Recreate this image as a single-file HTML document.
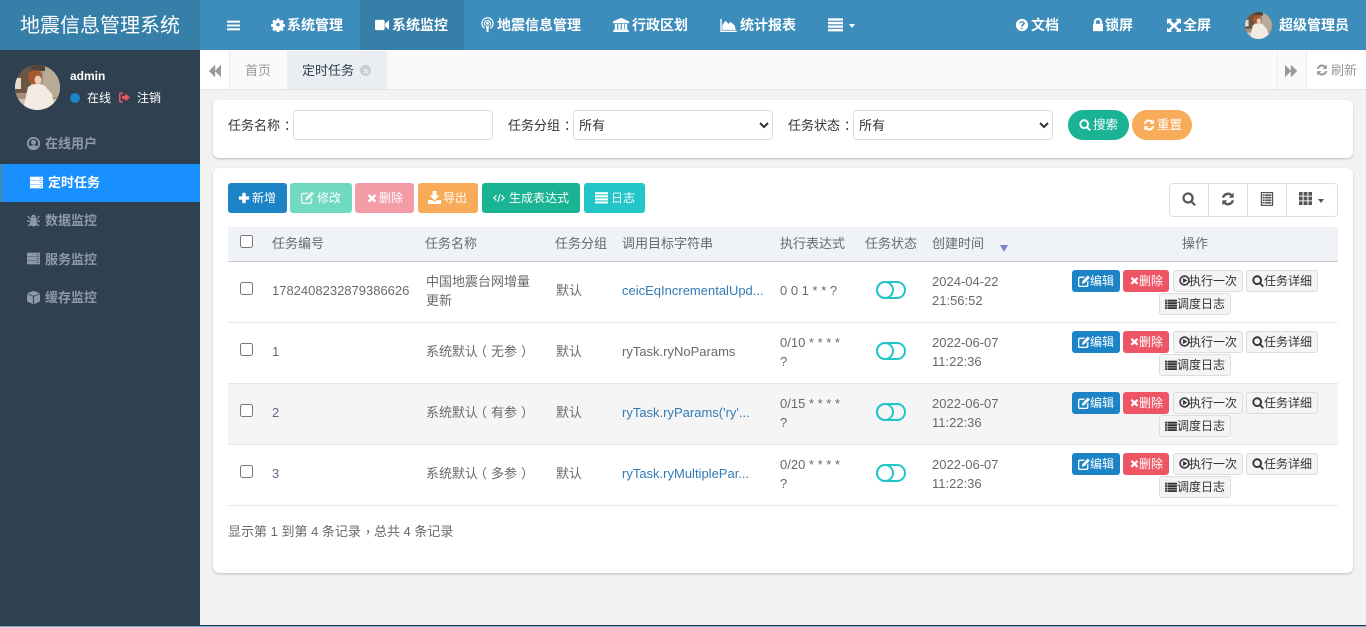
<!DOCTYPE html>
<html lang="zh-CN"><head><meta charset="utf-8"><title>定时任务</title>
<style>
*{box-sizing:border-box}
html,body{margin:0;padding:0;width:1366px;height:627px;overflow:hidden;background:#f2f2f2;font-family:"Liberation Sans","Noto Sans CJK SC",sans-serif;font-size:13px;color:#676a6c}
.a,.t,.i{position:absolute}
.t{white-space:nowrap;line-height:20px;height:20px}
.i{fill:currentColor;stroke:currentColor;stroke-width:.35;overflow:visible}
.i.av{stroke:none}
.n{color:#fff;font-weight:700;font-size:14px;top:15px}
.m{color:#8f99ac;font-weight:700;font-size:13px}
.b{position:absolute;height:30px;top:183px;border-radius:3px;color:#fff;font-size:12px;line-height:30px;white-space:nowrap}
.b span,.r span{position:absolute;top:0}
.r{position:absolute;height:22px;border-radius:3px;font-size:12px;line-height:20px;white-space:nowrap;border:1px solid #ddd;background:#f4f4f4;color:#333}
.r.e{background:#1c84c6;border-color:#1c84c6;color:#fff}
.r.d{background:#ed5565;border-color:#ed5565;color:#fff}
.r svg{position:absolute;top:4px;stroke:currentColor;stroke-width:.35}
.sw{position:absolute;left:876px;width:30px;height:18px;border:2px solid #23c6c8;border-radius:9px}
.sw i{position:absolute;left:-2px;top:-2px;width:18px;height:18px;border:2px solid #23c6c8;border-radius:50%}
input[type=checkbox]{position:absolute;left:240px;width:13px;height:13px;margin:0}
select{position:absolute;top:110px;width:200px;height:30px;border:1px solid #ddd;border-radius:4px;background:#fff;font:13px "Liberation Sans","Noto Sans CJK SC",sans-serif;color:#333;padding:0 0 0 1px}
.link{color:#337ab7}
.lk2{color:#5a6a85}
.c{position:relative;left:4px}
.cm{position:relative;left:4px;top:-3px}
.pl,.pr{position:relative}
.pl{left:-4px}
.pr{left:4px}
</style></head><body>
<svg width="0" height="0" style="position:absolute"><defs>
<symbol id="bars" viewBox="0 0 14 14"><path d="M0 2h14v1.800H0zM0 6.100h14v1.800H0zM0 10.200h14v1.800H0z"/></symbol>
<symbol id="cog" viewBox="0 0 14 14"><path fill-rule="evenodd" d="M5.700 0h2.600l.3 2 1.400.6 1.700-1.200 1.800 1.900-1.100 1.600.6 1.400 2 .4v2.600l-2 .3-.6 1.400 1.100 1.700-1.800 1.800-1.700-1.100-1.400.6-.3 1.900H5.700l-.3-1.900-1.400-.6-1.700 1.100L.5 12.600l1.100-1.700L1 9.500l-2-.3V6.600l2-.4.600-1.400L.5 3.200l1.800-1.900L4 2.600l1.400-.6zM7 4.800a2.200 2.200 0 1 0 0 4.400 2.200 2.200 0 0 0 0-4.400z" transform="translate(1 .6) scale(.86)"/></symbol>
<symbol id="video" viewBox="0 0 14 14"><path d="M0 3.500Q0 2 1.500 2h6.500Q9.500 2 9.500 3.500v7q0 1.500-1.500 1.500H1.500Q0 12 0 10.500zM10.300 5.500 14 2.500v9l-3.700-3z"/></symbol>
<symbol id="pod" viewBox="0 0 14 16"><g fill="none" stroke="currentColor" stroke-width="1.300"><path d="M4 11.500a6 6 0 1 1 6 0"/><path d="M4.800 9a3.300 3.300 0 1 1 4.400 0"/></g><circle cx="7" cy="6.200" r="1.400"/><path d="M5.700 9h2.600l-.5 6.500H6.200z"/></symbol>
<symbol id="bank" viewBox="0 0 16 14"><path d="M8 0l8 3.500V5H0V3.500zM2 6h2v5H2zM5.500 6h2v5h-2zM9 6h2v5H9zM12 6h2v5h-2zM1 11.500h14V12.800H1zM0 13h16v1H0z"/></symbol>
<symbol id="area" viewBox="0 0 16 14"><path d="M0 1h1v11.800h15V14H0zM2 11.800V7l3-4 3 3 2-2 4 3.500 1 4.300z"/></symbol>
<symbol id="tasks" viewBox="0 0 16 14"><path d="M0 0h16v2.200H0zM0 3.800h16v2.200H0zM0 7.600h16v2.200H0zM0 11.400h16v2.200H0z"/></symbol>
<symbol id="q" viewBox="0 0 14 14"><path fill-rule="evenodd" d="M7 1a6 6 0 1 1 0 12A6 6 0 0 1 7 1zM5.600 9.800v1.500h2.200V9.800zM7 3C5.400 3 4.300 3.800 4.200 5.300l1.700.3c.1-.8.500-1.100 1.100-1.100.5 0 1 .3 1 .8 0 .4-.3.700-.8 1-.9.600-1.300 1-1.300 2.100v.3h1.900c0-.7.200-.9.900-1.300.7-.5 1.300-1.100 1.300-2.100C10 3.800 8.600 3 7 3z"/></symbol>
<symbol id="lock" viewBox="0 0 10 14"><path fill-rule="evenodd" d="M0 6h1V4a4 4 0 0 1 8 0v2h1v7H0zM2.800 6h4.400V4a2.200 2.200 0 0 0-4.400 0z"/></symbol>
<symbol id="exp" viewBox="0 0 14 14"><path d="M0 1h5L3.500 2.500 7 6 10.500 2.500 9 1h5v5l-1.500-1.500L9 8l3.500 3.500L14 10v4H9l1.500-1.500L7 9l-3.500 3.500L5 14H0v-4l1.500 1.500L5 8 1.500 4.500 0 6z"/></symbol>
<symbol id="user" viewBox="0 0 14 14"><path fill-rule="evenodd" d="M7 0a7 7 0 1 1 0 14A7 7 0 0 1 7 0zM7 1.700a5.300 5.300 0 0 0-4 8.700C3.700 9.400 5 9 7 9s3.300.4 4 1.400a5.300 5.300 0 0 0-4-8.700zm0 1.500a2.500 2.500 0 1 1 0 5 2.500 2.500 0 0 1 0-5z"/></symbol>
<symbol id="srv" viewBox="0 0 14 14"><path fill-rule="evenodd" d="M0 1h14v3.500H0zM0 5.300h14v3.500H0zM0 9.600h14v3.500H0zM10 2.300v1h3v-1zM10 6.500v1h3v-1zM10 10.800v1h3v-1z"/></symbol>
<symbol id="bug" viewBox="0 0 14 14"><path d="M4.500 3.500a2.500 2.500 0 0 1 5 0zM4 4.300h6L10.500 12Q7 14.500 3.500 12zM1 2l2.800 3-.6.600L.3 2.700zM13 2l-2.800 3 .6.600 2.900-2.900zM0 7.300h3.200v1H0zM10.800 7.300H14v1h-3.200zM3.300 10l-2.500 2.500.7.700L4 11zM10.700 10l2.500 2.500-.7.700L10 11z"/></symbol>
<symbol id="cube" viewBox="0 0 14 14"><path d="M7 0l6.500 2.500L7 5 .5 2.500zM0 3.500l6.300 2.500v8L0 11zM14 3.500 7.700 6v8l6.300-3z"/></symbol>
<symbol id="signout" viewBox="0 0 12 12"><path d="M0 2q0-1.500 1.500-1.500H4V2H1.600v8H4v1.500H1.500Q0 11.500 0 10zM7 2l5 4-5 4V7.600H3.500V4.400H7z"/></symbol>
<symbol id="bk" viewBox="0 0 12 12"><path d="M6 0v12L0 6zM12 0v12L6 6z"/></symbol>
<symbol id="fw" viewBox="0 0 12 12"><path d="M0 0v12L6 6zM6 0v12L12 6z"/></symbol>
<symbol id="ref" viewBox="0 0 14 14"><path d="M12.500 1v4.500H8l1.700-1.700A4 4 0 0 0 3.300 5.500H1.100a6 6 0 0 1 10-3.100zM1.500 13V8.500H6l-1.700 1.700a4 4 0 0 0 6.400-1.700h2.200a6 6 0 0 1-10 3.100z"/></symbol>
<symbol id="srch" viewBox="0 0 14 14"><path fill-rule="evenodd" d="M6 .5a5.500 5.500 0 0 1 4.400 8.800l3.300 3.300-1.300 1.300-3.300-3.300A5.500 5.500 0 1 1 6 .5zm0 1.900a3.600 3.600 0 1 0 0 7.200 3.600 3.600 0 0 0 0-7.200z"/></symbol>
<symbol id="plus" viewBox="0 0 12 12"><path d="M4.500 1h3v3.500H11v3H7.500V11h-3V7.500H1v-3h3.500z"/></symbol>
<symbol id="edit" viewBox="0 0 14 14"><path d="M2.500 2H8L6.700 3.300H2.500Q1.300 3.300 1.300 4.500v7q0 1.200 1.200 1.200h7q1.200 0 1.200-1.200V8L12 6.700v4.800Q12 14 9.500 14h-7Q0 14 0 11.500v-7Q0 2 2.500 2zM11.500.7 13.800 3 7.500 9.300 4.700 10l.7-3z"/></symbol>
<symbol id="x" viewBox="0 0 12 12"><path d="M3 1.500 6 4.500l3-3L11 3.500l-3 2.900 3 3-2 2-3-3-3 3-2-2 3-3-3-2.900z"/></symbol>
<symbol id="dl" viewBox="0 0 14 14"><path d="M5 0h4v5h3L7 10 2 5h3zM0 10h4.500L7 12l2.500-2H14v4H0z"/></symbol>
<symbol id="code" viewBox="0 0 14 12"><path fill="none" stroke="currentColor" stroke-width="1.300" d="M4 3 1 6l3 3M10 3l3 3-3 3M8.300 1.500 5.700 10.500"/></symbol>
<symbol id="play" viewBox="0 0 14 14"><path fill-rule="evenodd" d="M7 .5a6.500 6.500 0 1 1 0 13 6.500 6.500 0 0 1 0-13zM7 2.200a4.800 4.800 0 1 0 0 9.600 4.800 4.800 0 0 0 0-9.600zM5.300 4l5 3-5 3z"/></symbol>
<symbol id="list" viewBox="0 0 14 12"><path d="M0 1h2v2H0zM3 1h11v2H3zM0 4h2v2H0zM3 4h11v2H3zM0 7h2v2H0zM3 7h11v2H3zM0 10h2v2H0zM3 10h11v2H3z"/></symbol>
<symbol id="tbl" viewBox="0 0 14 14"><path fill-rule="evenodd" d="M1 0h12v14H1zM2 1v12h10V1zM3 2.500h1.500v1.300H3zM5.300 2.500H11v1.300H5.300zM3 5h1.500v1.300H3zM5.300 5H11v1.300H5.300zM3 7.600h1.500v1.300H3zM5.300 7.600H11v1.300H5.300zM3 10.200h1.500v1.300H3zM5.300 10.200H11v1.300H5.300z"/></symbol>
<symbol id="grid" viewBox="0 0 14 14"><path d="M0 0h3.700v3.800H0zM5.100 0h3.800v3.800H5.100zM10.300 0H14v3.800h-3.700zM0 5.100h3.700v3.800H0zM5.100 5.100h3.800v3.800H5.100zM10.300 5.100H14v3.800h-3.700zM0 10.200h3.700V14H0zM5.100 10.200h3.800V14H5.100zM10.300 10.200H14V14h-3.700z"/></symbol>
<symbol id="av" viewBox="0 0 45 45"><clipPath id="cp"><circle cx="22.500" cy="22.500" r="22.500"/></clipPath><g clip-path="url(#cp)"><rect width="45" height="45" fill="#a8917b"/><rect width="16" height="28" fill="#6b5645"/><rect x="28" width="17" height="32" fill="#b9ab97"/><rect x="16" width="14" height="6" fill="#53423a"/><rect x="0" y="13" width="6" height="11" fill="#e6dccb"/><rect y="34" width="45" height="11" fill="#d1c1ae"/><path d="M13 22q7-5 16-2l8 9 3 16H8l3-14z" fill="#f1ebe2"/><circle cx="20" cy="12" r="7" fill="#a9592f"/><ellipse cx="23" cy="15" rx="3.500" ry="4.500" fill="#ecccb6"/></g></symbol>
</defs></svg>

<!-- header -->
<div class="a" style="left:0;top:0;width:1366px;height:50px;background:#3c8dbc"></div>
<div class="a" style="left:0;top:0;width:200px;height:50px;background:#367fa9"></div>
<div class="a" style="left:360px;top:0;width:104px;height:50px;background:#367fa9"></div>
<div class="t" style="left:20px;top:14px;height:24px;line-height:24px;font-size:20px;color:#fff">地震信息管理系统</div>
<svg class="i" style="left:227px;top:19px;width:13px;height:13px;color:#fff"><use href="#bars"/></svg>
<svg class="i" style="left:271px;top:18px;width:14px;height:14px;color:#fff"><use href="#cog"/></svg>
<div class="t n" style="left:287px">系统管理</div>
<svg class="i" style="left:375px;top:18px;width:14px;height:14px;color:#fff"><use href="#video"/></svg>
<div class="t n" style="left:392px">系统监控</div>
<svg class="i" style="left:481px;top:17px;width:13px;height:16px;color:#fff"><use href="#pod"/></svg>
<div class="t n" style="left:497px">地震信息管理</div>
<svg class="i" style="left:613px;top:18px;width:16px;height:14px;color:#fff"><use href="#bank"/></svg>
<div class="t n" style="left:632px">行政区划</div>
<svg class="i" style="left:720px;top:18px;width:17px;height:14px;color:#fff"><use href="#area"/></svg>
<div class="t n" style="left:740px">统计报表</div>
<svg class="i" style="left:828px;top:18px;width:15px;height:14px;color:#fff"><use href="#tasks"/></svg>
<div class="a" style="left:849px;top:24px;border:3.500px solid transparent;border-top:4px solid #fff;border-bottom:0"></div>
<svg class="i" style="left:1015px;top:18px;width:14px;height:14px;color:#fff"><use href="#q"/></svg>
<div class="t n" style="left:1031px">文档</div>
<svg class="i" style="left:1093px;top:18px;width:10px;height:14px;color:#fff"><use href="#lock"/></svg>
<div class="t n" style="left:1105px">锁屏</div>
<svg class="i" style="left:1167px;top:18px;width:14px;height:14px;color:#fff"><use href="#exp"/></svg>
<div class="t n" style="left:1183px">全屏</div>
<svg class="i av" style="left:1245px;top:12px;width:27px;height:27px"><use href="#av"/></svg>
<div class="t n" style="left:1279px">超级管理员</div>

<!-- sidebar -->
<div class="a" style="left:0;top:50px;width:200px;height:575px;background:#2f4050"></div>
<svg class="i av" style="left:15px;top:65px;width:45px;height:45px"><use href="#av"/></svg>
<div class="t" style="left:70px;top:66px;color:#fff;font-weight:700;font-size:12px">admin</div>
<div class="a" style="left:70px;top:93px;width:10px;height:10px;border-radius:50%;background:#1c84c6"></div>
<div class="t" style="left:87px;top:88px;color:#fff;font-size:12px">在线</div>
<svg class="i" style="left:119px;top:92px;width:11px;height:11px;color:#ed5565"><use href="#signout"/></svg>
<div class="t" style="left:137px;top:88px;color:#fff;font-size:12px">注销</div>

<svg class="i" style="left:27px;top:137px;width:13px;height:13px;color:#8f99ac"><use href="#user"/></svg>
<div class="t m" style="left:45px;top:134px">在线用户</div>
<div class="a" style="left:0;top:164px;width:200px;height:38px;background:#1890ff;border-left:3px solid #3c8dbc"></div>
<svg class="i" style="left:30px;top:176px;width:13px;height:13px;color:#fff"><use href="#srv"/></svg>
<div class="t m" style="left:48px;top:173px;color:#fff">定时任务</div>
<svg class="i" style="left:27px;top:214px;width:13px;height:13px;color:#8f99ac"><use href="#bug"/></svg>
<div class="t m" style="left:45px;top:211px">数据监控</div>
<svg class="i" style="left:27px;top:252px;width:13px;height:13px;color:#8f99ac"><use href="#srv"/></svg>
<div class="t m" style="left:45px;top:250px">服务监控</div>
<svg class="i" style="left:27px;top:291px;width:13px;height:13px;color:#8f99ac"><use href="#cube"/></svg>
<div class="t m" style="left:45px;top:288px">缓存监控</div>

<!-- tabs -->
<div class="a" style="left:200px;top:50px;width:1166px;height:40px;background:#fafafa;border-bottom:1px solid #e4e4e4"></div>
<div class="a" style="left:200px;top:50px;width:30px;height:39px;background:#fff;border-right:1px solid #eee"></div>
<svg class="i" style="left:209px;top:65px;width:12px;height:12px;color:#999"><use href="#bk"/></svg>
<div class="t" style="left:245px;top:61px;color:#999">首页</div>
<div class="a" style="left:287px;top:51px;width:100px;height:38px;background:#eaedf1"></div>
<div class="t" style="left:302px;top:61px;color:#2f4050">定时任务</div>
<div class="a" style="left:360px;top:65px;width:11px;height:11px;border-radius:50%;background:#ccc"></div>
<svg class="i" style="left:362.500px;top:67.500px;width:6px;height:6px;color:#eaedf1"><use href="#x"/></svg>
<div class="a" style="left:1277px;top:51px;width:1px;height:38px;background:#eee"></div>
<div class="a" style="left:1306px;top:51px;width:60px;height:38px;background:#fff;border-left:1px solid #eee"></div>
<svg class="i" style="left:1285px;top:65px;width:12px;height:12px;color:#999"><use href="#fw"/></svg>
<svg class="i" style="left:1316px;top:64px;width:12px;height:12px;color:#999"><use href="#ref"/></svg>
<div class="t" style="left:1331px;top:61px;color:#999">刷新</div>

<!-- search card -->
<div class="a" style="left:213px;top:100px;width:1140px;height:58px;background:#fff;border-radius:6px;box-shadow:0 1px 2px rgba(0,0,0,.22)"></div>
<div class="t" style="left:228px;top:116px;color:#333">任务名称<span class="c">：</span></div>
<input class="a" style="left:293px;top:110px;width:200px;height:30px;border:1px solid #ddd;border-radius:4px;background:#fff">
<div class="t" style="left:508px;top:116px;color:#333">任务分组<span class="c">：</span></div>
<select style="left:573px"><option>所有</option></select>
<div class="t" style="left:788px;top:116px;color:#333">任务状态<span class="c">：</span></div>
<select style="left:853px"><option>所有</option></select>
<div class="b" style="left:1068px;top:110px;width:61px;border-radius:15px;background:#1ab394">
<svg class="i" style="left:11px;top:9px;width:12px;height:12px;color:#fff"><use href="#srch"/></svg><span style="left:25px;font-size:12.500px">搜索</span></div>
<div class="b" style="left:1132px;top:110px;width:60px;border-radius:15px;background:#f8ac59">
<svg class="i" style="left:11px;top:9px;width:12px;height:12px;color:#fff"><use href="#ref"/></svg><span style="left:25px;font-size:12.500px">重置</span></div>

<!-- table card -->
<div class="a" style="left:213px;top:168px;width:1140px;height:405px;background:#fff;border-radius:6px;box-shadow:0 1px 2px rgba(0,0,0,.22)"></div>

<div class="b" style="left:228px;width:59px;background:#1c84c6"><svg class="i" style="left:10px;top:9px;width:12px;height:12px;color:#fff"><use href="#plus"/></svg><span style="left:24px">新增</span></div>
<div class="b" style="left:290px;width:62px;background:#6fd9c2"><svg class="i" style="left:11px;top:8px;width:13px;height:13px;color:#e8f5ee"><use href="#edit"/></svg><span style="left:27px">修改</span></div>
<div class="b" style="left:355px;width:59px;background:#f49ca6"><svg class="i" style="left:12px;top:10px;width:10px;height:10px;color:#fff"><use href="#x"/></svg><span style="left:24px">删除</span></div>
<div class="b" style="left:418px;width:60px;background:#f8ac59"><svg class="i" style="left:10px;top:8px;width:13px;height:13px;color:#fff"><use href="#dl"/></svg><span style="left:25px">导出</span></div>
<div class="b" style="left:482px;width:98px;background:#1ab394"><svg class="i" style="left:11px;top:9px;width:12px;height:12px;color:#fff"><use href="#code"/></svg><span style="left:27px">生成表达式</span></div>
<div class="b" style="left:584px;width:61px;background:#23c6c8"><svg class="i" style="left:11px;top:9px;width:13px;height:12px;color:#fff"><use href="#tasks"/></svg><span style="left:27px">日志</span></div>

<div class="a" style="left:1169px;top:183px;width:169px;height:34px;border:1px solid #ddd;border-radius:4px;background:#fff"></div>
<div class="a" style="left:1208px;top:184px;width:1px;height:32px;background:#ddd"></div>
<div class="a" style="left:1247px;top:184px;width:1px;height:32px;background:#ddd"></div>
<div class="a" style="left:1286px;top:184px;width:1px;height:32px;background:#ddd"></div>
<svg class="i" style="left:1182px;top:192px;width:14px;height:14px;color:#555"><use href="#srch"/></svg>
<svg class="i" style="left:1221px;top:192px;width:14px;height:14px;color:#555"><use href="#ref"/></svg>
<svg class="i" style="left:1260px;top:192px;width:14px;height:14px;color:#555"><use href="#tbl"/></svg>
<svg class="i" style="left:1299px;top:192px;width:13px;height:13px;color:#555"><use href="#grid"/></svg>
<div class="a" style="left:1318px;top:199px;border:3.500px solid transparent;border-top:4px solid #555;border-bottom:0"></div>

<!-- table head -->
<div class="a" style="left:228px;top:227px;width:1110px;height:35px;background:#eff2f7;border-bottom:1px solid #ccc"></div>
<input type="checkbox" style="top:235px">
<div class="t" style="left:272px;top:234px">任务编号</div>
<div class="t" style="left:425px;top:234px">任务名称</div>
<div class="t" style="left:555px;top:234px">任务分组</div>
<div class="t" style="left:622px;top:234px">调用目标字符串</div>
<div class="t" style="left:780px;top:234px">执行表达式</div>
<div class="t" style="left:865px;top:234px">任务状态</div>
<div class="t" style="left:932px;top:234px">创建时间</div>
<div class="a" style="left:1000px;top:245px;border:4.500px solid transparent;border-top:7px solid #7b83d6;border-bottom:0"></div>
<div class="t" style="left:1182px;top:234px">操作</div>

<!-- rows -->
<div class="a" style="left:228px;top:322px;width:1110px;height:1px;background:#e7eaec"></div>
<div class="a" style="left:228px;top:384px;width:1110px;height:60px;background:#f5f5f5"></div>
<div class="a" style="left:228px;top:383px;width:1110px;height:1px;background:#e7eaec"></div>
<div class="a" style="left:228px;top:444px;width:1110px;height:1px;background:#e7eaec"></div>
<div class="a" style="left:228px;top:505px;width:1110px;height:1px;background:#e7eaec"></div>

<!-- row 1 -->
<input type="checkbox" style="top:282px">
<div class="t" style="left:272px;top:281px">1782408232879386626</div>
<div class="t" style="left:426px;top:272px">中国地震台网增量</div>
<div class="t" style="left:426px;top:291px">更新</div>
<div class="t" style="left:556px;top:281px">默认</div>
<div class="t link" style="left:622px;top:281px">ceicEqIncrementalUpd...</div>
<div class="t" style="left:780px;top:281px">0 0 1 * * ?</div>
<div class="sw" style="top:281px"><i></i></div>
<div class="t" style="left:932px;top:272px">2024-04-22</div>
<div class="t" style="left:932px;top:291px">21:56:52</div>
<div class="r e" style="left:1072px;top:270px;width:48px"><svg style="left:5px;width:12px;height:12px;fill:#fff"><use href="#edit"/></svg><span style="left:17px">编辑</span></div>
<div class="r d" style="left:1123px;top:270px;width:46px"><svg style="left:6px;top:5px;width:9px;height:9px;fill:#fff"><use href="#x"/></svg><span style="left:15px">删除</span></div>
<div class="r" style="left:1173px;top:270px;width:70px"><svg style="left:5px;width:11px;height:11px;fill:#333"><use href="#play"/></svg><span style="left:15px">执行一次</span></div>
<div class="r" style="left:1246px;top:270px;width:72px"><svg style="left:5px;width:12px;height:12px;fill:#333"><use href="#srch"/></svg><span style="left:17px">任务详细</span></div>
<div class="r" style="left:1159px;top:293px;width:72px"><svg style="left:5px;top:5px;width:12px;height:10px;fill:#333"><use href="#list"/></svg><span style="left:17px">调度日志</span></div>

<!-- row 2 -->
<input type="checkbox" style="top:343px">
<div class="t lk2" style="left:272px;top:342px">1</div>
<div class="t" style="left:426px;top:342px">系统默认<span class="pl">（</span>无参<span class="pr">）</span></div>
<div class="t" style="left:556px;top:342px">默认</div>
<div class="t" style="left:622px;top:342px">ryTask.ryNoParams</div>
<div class="t" style="left:780px;top:333px">0/10 * * * *</div>
<div class="t" style="left:780px;top:352px">?</div>
<div class="sw" style="top:342px"><i></i></div>
<div class="t" style="left:932px;top:333px">2022-06-07</div>
<div class="t" style="left:932px;top:352px">11:22:36</div>
<div class="r e" style="left:1072px;top:331px;width:48px"><svg style="left:5px;width:12px;height:12px;fill:#fff"><use href="#edit"/></svg><span style="left:17px">编辑</span></div>
<div class="r d" style="left:1123px;top:331px;width:46px"><svg style="left:6px;top:5px;width:9px;height:9px;fill:#fff"><use href="#x"/></svg><span style="left:15px">删除</span></div>
<div class="r" style="left:1173px;top:331px;width:70px"><svg style="left:5px;width:11px;height:11px;fill:#333"><use href="#play"/></svg><span style="left:15px">执行一次</span></div>
<div class="r" style="left:1246px;top:331px;width:72px"><svg style="left:5px;width:12px;height:12px;fill:#333"><use href="#srch"/></svg><span style="left:17px">任务详细</span></div>
<div class="r" style="left:1159px;top:354px;width:72px"><svg style="left:5px;top:5px;width:12px;height:10px;fill:#333"><use href="#list"/></svg><span style="left:17px">调度日志</span></div>

<!-- row 3 -->
<input type="checkbox" style="top:404px">
<div class="t lk2" style="left:272px;top:403px">2</div>
<div class="t" style="left:426px;top:403px">系统默认<span class="pl">（</span>有参<span class="pr">）</span></div>
<div class="t" style="left:556px;top:403px">默认</div>
<div class="t link" style="left:622px;top:403px">ryTask.ryParams('ry'...</div>
<div class="t" style="left:780px;top:394px">0/15 * * * *</div>
<div class="t" style="left:780px;top:413px">?</div>
<div class="sw" style="top:403px"><i></i></div>
<div class="t" style="left:932px;top:394px">2022-06-07</div>
<div class="t" style="left:932px;top:413px">11:22:36</div>
<div class="r e" style="left:1072px;top:392px;width:48px"><svg style="left:5px;width:12px;height:12px;fill:#fff"><use href="#edit"/></svg><span style="left:17px">编辑</span></div>
<div class="r d" style="left:1123px;top:392px;width:46px"><svg style="left:6px;top:5px;width:9px;height:9px;fill:#fff"><use href="#x"/></svg><span style="left:15px">删除</span></div>
<div class="r" style="left:1173px;top:392px;width:70px"><svg style="left:5px;width:11px;height:11px;fill:#333"><use href="#play"/></svg><span style="left:15px">执行一次</span></div>
<div class="r" style="left:1246px;top:392px;width:72px"><svg style="left:5px;width:12px;height:12px;fill:#333"><use href="#srch"/></svg><span style="left:17px">任务详细</span></div>
<div class="r" style="left:1159px;top:415px;width:72px"><svg style="left:5px;top:5px;width:12px;height:10px;fill:#333"><use href="#list"/></svg><span style="left:17px">调度日志</span></div>

<!-- row 4 -->
<input type="checkbox" style="top:465px">
<div class="t lk2" style="left:272px;top:464px">3</div>
<div class="t" style="left:426px;top:464px">系统默认<span class="pl">（</span>多参<span class="pr">）</span></div>
<div class="t" style="left:556px;top:464px">默认</div>
<div class="t link" style="left:622px;top:464px">ryTask.ryMultiplePar...</div>
<div class="t" style="left:780px;top:455px">0/20 * * * *</div>
<div class="t" style="left:780px;top:474px">?</div>
<div class="sw" style="top:464px"><i></i></div>
<div class="t" style="left:932px;top:455px">2022-06-07</div>
<div class="t" style="left:932px;top:474px">11:22:36</div>
<div class="r e" style="left:1072px;top:453px;width:48px"><svg style="left:5px;width:12px;height:12px;fill:#fff"><use href="#edit"/></svg><span style="left:17px">编辑</span></div>
<div class="r d" style="left:1123px;top:453px;width:46px"><svg style="left:6px;top:5px;width:9px;height:9px;fill:#fff"><use href="#x"/></svg><span style="left:15px">删除</span></div>
<div class="r" style="left:1173px;top:453px;width:70px"><svg style="left:5px;width:11px;height:11px;fill:#333"><use href="#play"/></svg><span style="left:15px">执行一次</span></div>
<div class="r" style="left:1246px;top:453px;width:72px"><svg style="left:5px;width:12px;height:12px;fill:#333"><use href="#srch"/></svg><span style="left:17px">任务详细</span></div>
<div class="r" style="left:1159px;top:476px;width:72px"><svg style="left:5px;top:5px;width:12px;height:10px;fill:#333"><use href="#list"/></svg><span style="left:17px">调度日志</span></div>

<div class="t" style="left:228px;top:522px">显示第 1 到第 4 条记录<span class="cm">，</span>总共 4 条记录</div>

<!-- bottom strip -->
<div class="a" style="left:0;top:625px;width:1366px;height:2px;background:linear-gradient(#24384a 50%,#7fb2d0 50%)"></div>
</body></html>
